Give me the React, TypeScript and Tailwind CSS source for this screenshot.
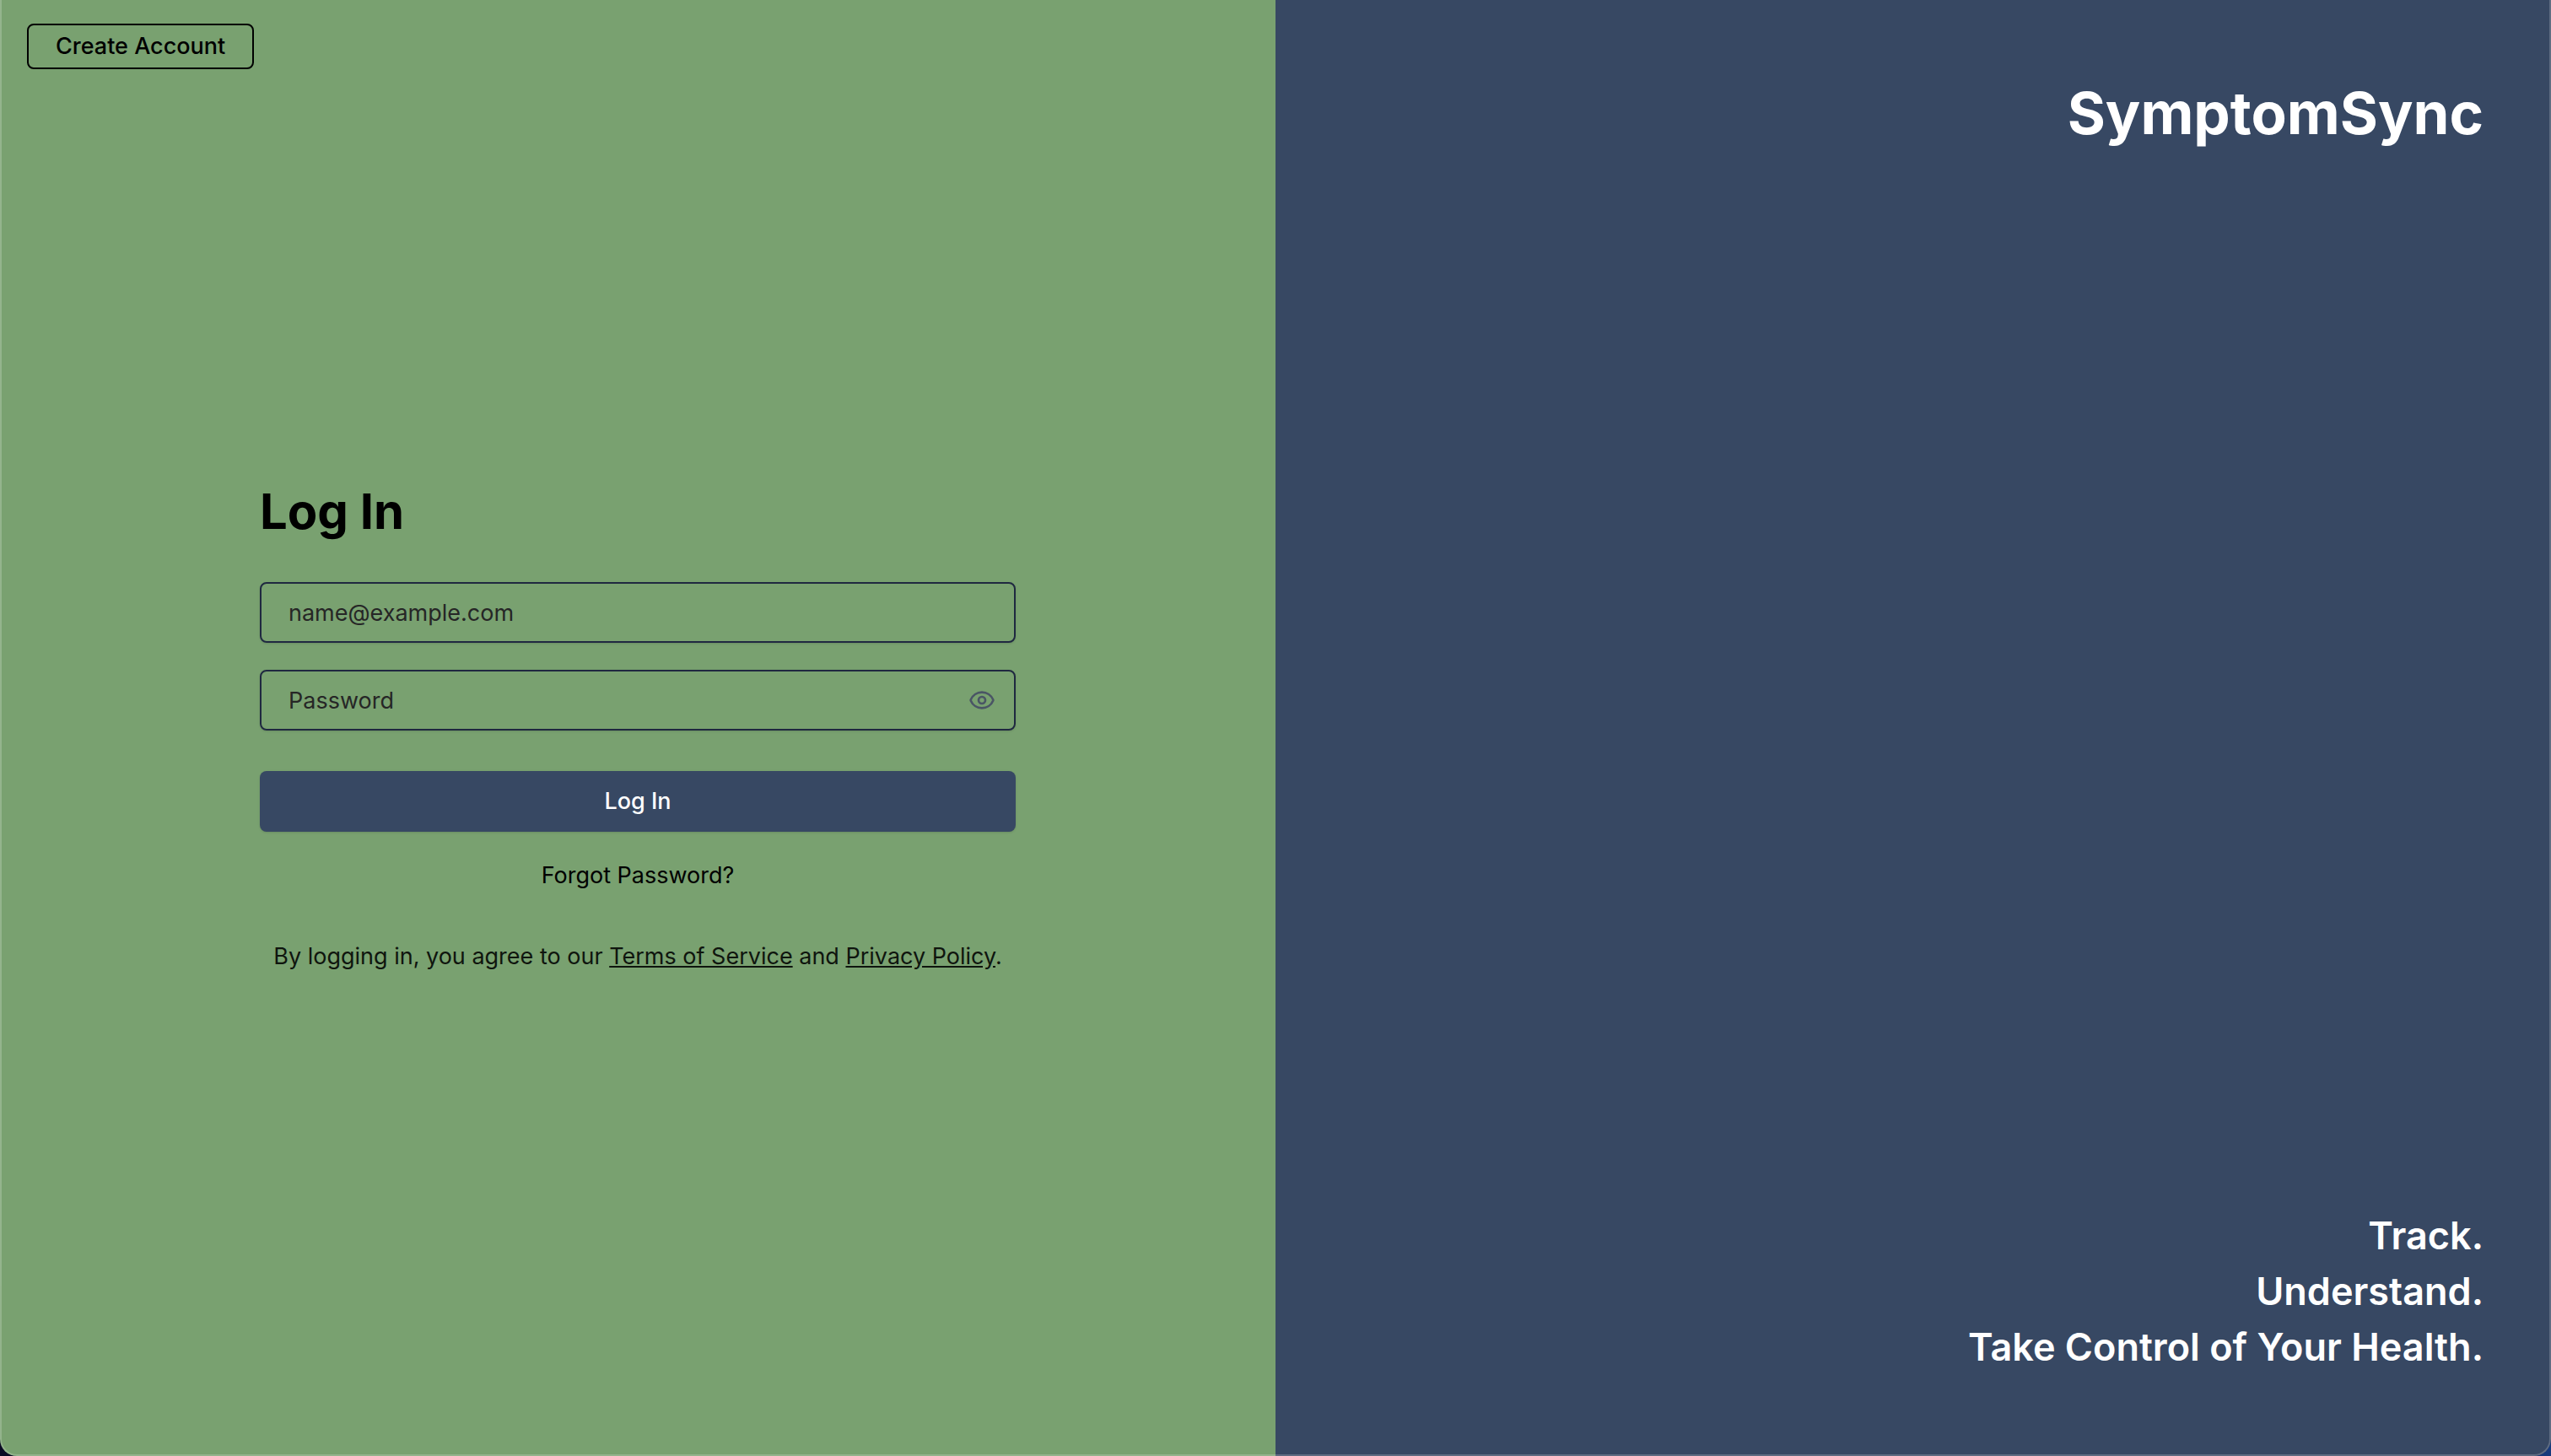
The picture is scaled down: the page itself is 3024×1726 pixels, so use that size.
import { useState } from "react";

const fieldClass =
  "h-[72px] w-full rounded-lg border-2 border-[#1f2840] bg-transparent px-8 text-[27px] text-[#262626] shadow-sm outline-none placeholder:text-[#262626] focus:border-[#374863]";

function LoginForm() {
  const [visible, setVisible] = useState(false);

  return (
    <form className="w-full max-w-4xl" onSubmit={(event) => event.preventDefault()}>
      <h1 className="mb-12 text-[58px] leading-[72px] font-bold text-black">Log In</h1>
      <div className="mb-12 space-y-8">
        <input type="email" aria-label="Email" placeholder="name@example.com" className={fieldClass} />
        <div className="relative">
          <input
            type={visible ? "text" : "password"}
            aria-label="Password"
            placeholder="Password"
            className={fieldClass}
          />
          <button
            type="button"
            aria-label={visible ? "Hide password" : "Show password"}
            onClick={() => setVisible(!visible)}
            className="absolute inset-y-0 right-6 flex items-center text-[#4a5565]"
          >
            <svg
              viewBox="0 0 24 24"
              fill="none"
              stroke="currentColor"
              strokeWidth="2"
              strokeLinecap="round"
              strokeLinejoin="round"
              className="size-8"
            >
              <path d="M2.06 12.35a1 1 0 0 1 0-.7 10.75 10.75 0 0 1 19.88 0 1 1 0 0 1 0 .7 10.75 10.75 0 0 1-19.88 0" />
              <circle cx="12" cy="12" r="3" />
            </svg>
          </button>
        </div>
      </div>
      <button
        type="submit"
        className="h-[72px] w-full rounded-lg bg-[#374863] text-[27px] font-medium text-white shadow-sm"
      >
        Log In
      </button>
      <div className="mt-8 text-center text-[27px] leading-10 text-black">
        <a href="#forgot">Forgot Password?</a>
      </div>
      <p className="mt-14 text-center text-[27px] leading-10 text-[#0f150e]">
        By logging in, you agree to our{" "}
        <a href="#terms" className="underline">
          Terms of Service
        </a>{" "}
        and{" "}
        <a href="#privacy" className="underline">
          Privacy Policy
        </a>
        .
      </p>
    </form>
  );
}

export default function App() {
  return (
    <div className="min-h-screen bg-linear-to-r from-[#0a0a24] to-[#173a7c] font-['Inter',sans-serif]">
      <div className="relative grid min-h-screen grid-cols-2 overflow-hidden rounded-b-[20px]">
        <section className="relative flex items-center justify-center bg-[#79a170] pb-0.5">
          <a
            href="#signup"
            className="absolute top-7 left-8 flex h-[54px] items-center rounded-lg border-2 border-black px-8 text-[27px] font-medium text-black"
          >
            Create Account
          </a>
          <LoginForm />
        </section>
        <section className="flex flex-col justify-between bg-[#374863] px-20 py-24 text-right text-white">
          <h2 className="text-[69px] leading-[76px] font-bold">SymptomSync</h2>
          <p className="text-[45px] leading-[66px] font-semibold">
            Track.
            <br />
            Understand.
            <br />
            Take Control of Your Health.
          </p>
        </section>
        <div className="pointer-events-none absolute inset-0 rounded-b-[20px] border-x-2 border-b-2 border-white/20" />
      </div>
    </div>
  );
}
